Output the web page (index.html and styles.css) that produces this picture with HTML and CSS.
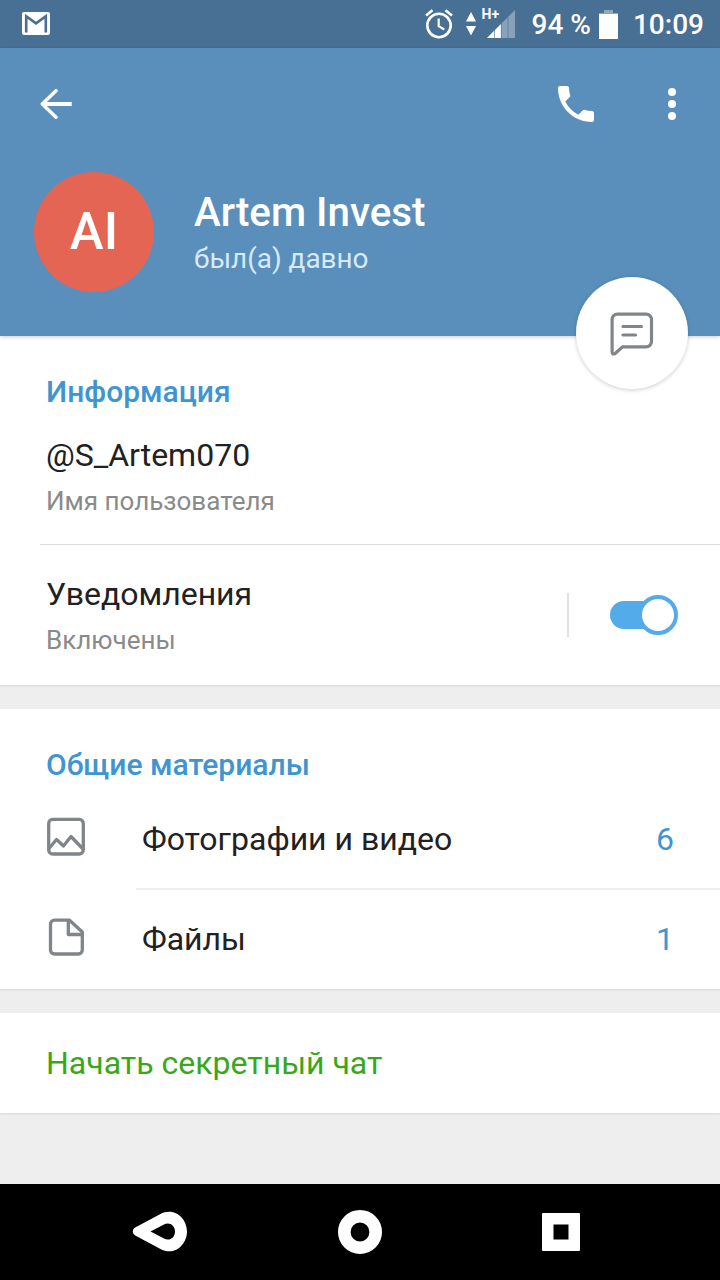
FILE: index.html
```html
<!DOCTYPE html>
<html lang="ru">
<head>
  <meta charset="UTF-8">
  <meta name="viewport" content="width=device-width, initial-scale=1.0">
  <title>Artem Invest</title>
  <link rel="stylesheet" href="styles.css">
</head>
<body>
  <div class="status-bar">
    <svg class="mail-icon" width="28" height="23" viewBox="0 0 28 23">
      <rect width="28" height="23" rx="2" fill="#fff"/>
      <path d="M4.200 20.500V4.200L14 11.400l9.800-7.200v16.300" fill="none" stroke="#487094" stroke-width="2.600"/>
    </svg>
    <div class="status-icons">
      <svg class="alarm-icon" width="28" height="30" viewBox="0 0 28 30" fill="none" stroke="#fff">
        <circle cx="14" cy="16.500" r="11.700" stroke-width="2.600"/>
        <path d="M13.700 9.500v7.600l5.600 3.400" stroke-width="2.200"/>
        <path d="M1 6.600L7.500 1.300M20.500 1.300L27 6.600" stroke-width="2.600"/>
      </svg>
      <svg class="signal-icon" width="50" height="32" viewBox="0 0 50 32">
        <path d="M5 4l5 9.600H0zM5 27.600L0 18h10z" fill="#fff"/>
        <path d="M49 2v28H21z" fill="#fff" fill-opacity=".35"/>
        <path d="M21 30l14-14v14z" fill="#fff"/>
        <path d="M28.500 22v8M35.300 15v15M42 9v21" stroke="#487094" stroke-opacity=".6" stroke-width="1"/>
      </svg>
      <span class="network">H+</span>
      <span class="battery-text">94 %</span>
      <svg class="battery-icon" width="19" height="29" viewBox="0 0 19 29">
        <path d="M5 0h9v3h5v2H0V3h5z" fill="#fff" fill-opacity=".4"/>
        <path d="M0 4h19v25H0z" fill="#fff"/>
      </svg>
      <span class="clock">10:09</span>
    </div>
  </div>

  <header class="header">
    <div class="toolbar">
      <svg class="back-icon" width="32" height="30" viewBox="0 0 32 30" fill="none" stroke="#fff" stroke-width="4">
        <path d="M2.500 15H31.700"/>
        <path d="M16 1.800L2.300 15L16 28.200" stroke-linecap="round" stroke-linejoin="round" stroke-width="3.500"/>
      </svg>
      <svg class="call-icon" width="36" height="36" viewBox="3 3 18 18">
        <path fill="#fff" d="M6.620 10.790c1.440 2.830 3.760 5.140 6.590 6.590l2.200-2.200c.27-.27.67-.36 1.020-.24 1.120.37 2.330.57 3.570.57.55 0 1 .45 1 1V20c0 .55-.45 1-1 1-9.390 0-17-7.610-17-17 0-.55.45-1 1-1h3.500c.55 0 1 .45 1 1 0 1.250.2 2.450.57 3.570.11.35.03.74-.25 1.020l-2.200 2.200z"/>
      </svg>
      <svg class="more-icon" width="8" height="32" viewBox="0 0 8 32" fill="#fff">
        <circle cx="4" cy="4" r="4"/>
        <circle cx="4" cy="16" r="4"/>
        <circle cx="4" cy="28" r="4"/>
      </svg>
    </div>
    <div class="profile">
      <div class="avatar">AI</div>
      <div class="profile-text">
        <h1 class="name">Artem Invest</h1>
        <p class="last-seen">был(а) давно</p>
      </div>
    </div>
    <button class="message-button">
      <svg width="44" height="44" viewBox="0 0 44 44" fill="none" stroke="#80858a" stroke-width="3.200" stroke-linecap="round" stroke-linejoin="round">
        <path d="M7.500 2.100H36a5.500 5.500 0 0 1 5.500 5.500V29.400a5.500 5.500 0 0 1-5.500 5.500H12.500L5.400 41.300Q2.100 43.300 2.100 39.800V7.600a5.500 5.500 0 0 1 5.400-5.500z"/>
        <path d="M13 14.500h18.500M13 23h12.500"/>
      </svg>
    </button>
  </header>

  <section class="card info">
    <h2 class="title">Информация</h2>
    <div class="info-row">
      <p class="value">@S_Artem070</p>
      <p class="caption">Имя пользователя</p>
    </div>
    <div class="notify-row">
      <div class="notify-text">
        <p class="value">Уведомления</p>
        <p class="caption">Включены</p>
      </div>
      <div class="separator"></div>
      <div class="switch"><span class="thumb"></span></div>
    </div>
  </section>

  <section class="card media">
    <h2 class="title">Общие материалы</h2>
    <div class="media-row">
      <svg class="media-icon" width="40" height="40" viewBox="0 0 40 40" fill="none" stroke="#80858a" stroke-width="3.300" stroke-linejoin="round">
        <rect x="2.700" y="2.400" width="34.600" height="34.600" rx="4"/>
        <path d="M3 31.500L10.500 22.500L17.500 29L25 19.500L37 32"/>
      </svg>
      <span class="media-name">Фотографии и видео</span>
      <span class="count">6</span>
    </div>
    <div class="media-row">
      <svg class="media-icon" width="40" height="40" viewBox="0 0 40 40" fill="none" stroke="#80858a" stroke-width="3.300" stroke-linejoin="round">
        <path d="M8.500 3.200H23.500L36.300 15V33a4 4 0 0 1-4 4H8.500a4 4 0 0 1-4-4V7.200a4 4 0 0 1 4-4z"/>
        <path d="M22.300 3.500v14H36"/>
      </svg>
      <span class="media-name">Файлы</span>
      <span class="count">1</span>
    </div>
  </section>

  <section class="card secret">
    <a class="secret-link">Начать секретный чат</a>
  </section>

  <nav class="nav-bar">
    <svg width="56" height="44" viewBox="0 0 56 44">
      <path fill="#fff" fill-rule="evenodd" d="M3.200 17.600L28 4.200C43 -3.500 55 9 55 21.500S43 47 28 38.800L3.200 25.400C0 23.500 0 19.500 3.200 17.600zM18.500 21.500L32 28.500C37 31.500 43 28 43 21.500S37 11.500 32 14.500z"/>
    </svg>
    <svg width="44" height="44" viewBox="0 0 44 44">
      <circle cx="22" cy="22" r="15.700" fill="none" stroke="#fff" stroke-width="12.600"/>
    </svg>
    <svg width="38" height="38" viewBox="0 0 38 38">
      <path d="M1 0h36a1 1 0 0 1 1 1v36a1 1 0 0 1-1 1H1a1 1 0 0 1-1-1V1a1 1 0 0 1 1-1zM11.500 11.500v15h15v-15z" fill="#fff" fill-rule="evenodd"/>
    </svg>
  </nav>
</body>
</html>
```
FILE: styles.css
```css
* {
  box-sizing: border-box;
}
body {
  margin: 0;
  height: 1280px;
  display: flex;
  flex-direction: column;
  background-color: #eeeeee;
  font-family: Roboto, sans-serif;
  overflow: hidden;
}
h1, h2, p {
  margin: 0;
}
svg {
  display: block;
  flex-shrink: 0;
}

/* Status bar */
.status-bar {
  height: 48px;
  display: flex;
  align-items: center;
  justify-content: space-between;
  padding: 0 16px 0 22px;
  background-color: #487094;
  color: white;
  font-size: 28px;
  font-weight: 500;
  line-height: 48px;
  white-space: nowrap;
}
.mail-icon {
  margin-bottom: 1px;
}
.status-icons {
  position: relative;
  display: flex;
  align-items: center;
}
.signal-icon {
  margin-left: 13px;
}
.network {
  position: absolute;
  left: 57px;
  top: 5px;
  font-size: 14px;
  font-weight: 700;
  line-height: 20px;
}
.battery-text {
  margin-left: 16px;
  padding-top: 2px;
}
.battery-icon {
  margin-left: 8px;
}
.clock {
  margin-left: 15px;
  padding-top: 2px;
}

/* Header */
.header {
  position: relative;
  z-index: 1;
  height: 288px;
  background-color: #5a8fbb;
  color: white;
  box-shadow: 0 1px 4px rgba(0, 0, 0, 0.2);
}
.toolbar {
  height: 112px;
  display: flex;
  align-items: center;
  padding: 0 44px 0 40px;
}
.call-icon {
  margin-left: auto;
  margin-right: 74px;
}
.profile {
  display: flex;
  padding: 12px 34px 0;
}
.avatar {
  width: 120px;
  height: 120px;
  border-radius: 50%;
  background-color: #e56555;
  font-size: 51px;
  font-weight: 500;
  line-height: 120px;
  text-align: center;
}
.profile-text {
  margin-left: 40px;
  padding-top: 17px;
}
.name {
  font-size: 40.3px;
  font-weight: 500;
  line-height: 48px;
}
.last-seen {
  margin-top: 4px;
  color: #d7eafa;
  font-size: 27.9px;
  line-height: 36px;
}
.message-button {
  position: absolute;
  right: 32px;
  bottom: -53px;
  width: 112px;
  height: 112px;
  display: flex;
  align-items: center;
  justify-content: center;
  padding: 2px 0 0;
  border: none;
  border-radius: 50%;
  background-color: white;
  box-shadow: 0 1px 4px rgba(0, 0, 0, 0.2);
}

/* Cards */
.card {
  background-color: white;
  box-shadow: 0 1px 2px rgba(0, 0, 0, 0.1);
}
.title {
  padding-left: 46px;
  color: #3e95d2;
  font-size: 30px;
  font-weight: 500;
  line-height: 36px;
}
.value {
  color: #212121;
  font-size: 32px;
  line-height: 40px;
}
.caption {
  margin-top: 10px;
  color: #8a8a8a;
  font-size: 26px;
  line-height: 32px;
}
.info {
  height: 349px;
  padding-top: 38px;
}
.info-row {
  height: 110px;
  margin: 25px 0 0 40px;
  padding-left: 6px;
  border-bottom: 1px solid #dcdcdc;
}
.notify-row {
  height: 140px;
  display: flex;
  align-items: center;
  padding: 0 42px 0 46px;
}
.separator {
  width: 2px;
  height: 44px;
  margin: 0 41px 0 auto;
  background-color: #e0e0e0;
}
.switch {
  width: 68px;
  height: 28px;
  display: flex;
  align-items: center;
  justify-content: flex-end;
  background: linear-gradient(#54abe9, #54abe9) left / 48px 28px no-repeat;
  border-radius: 14px 0 0 14px;
}
.thumb {
  width: 40px;
  height: 40px;
  flex-shrink: 0;
  border: 4px solid #54abe9;
  border-radius: 50%;
  background-color: white;
}
.media {
  height: 280px;
  margin-top: 24px;
  padding-top: 38px;
}
.media .title {
  margin-bottom: 5px;
}
.media-row {
  height: 100px;
  display: flex;
  align-items: center;
  padding: 1px 46px 0;
  color: #212121;
  font-size: 32px;
  background: linear-gradient(#f0f0f0, #f0f0f0) 136px 0 / 100% 2px no-repeat;
}
.media .title + .media-row {
  background: none;
}
.media-icon {
  margin-bottom: 4px;
}
.media-name {
  margin-left: 56px;
}
.count {
  margin-left: auto;
  color: #3e95d2;
}
.secret {
  height: 100px;
  margin-top: 24px;
  padding-left: 46px;
}
.secret-link {
  color: #37a818;
  font-size: 32px;
  line-height: 100px;
}

/* System navigation */
.nav-bar {
  height: 96px;
  display: flex;
  align-items: center;
  margin-top: auto;
  padding: 0 140px 0 132px;
  gap: 150px;
  background-color: black;
}
.nav-bar svg:last-child {
  margin-left: auto;
}
```
